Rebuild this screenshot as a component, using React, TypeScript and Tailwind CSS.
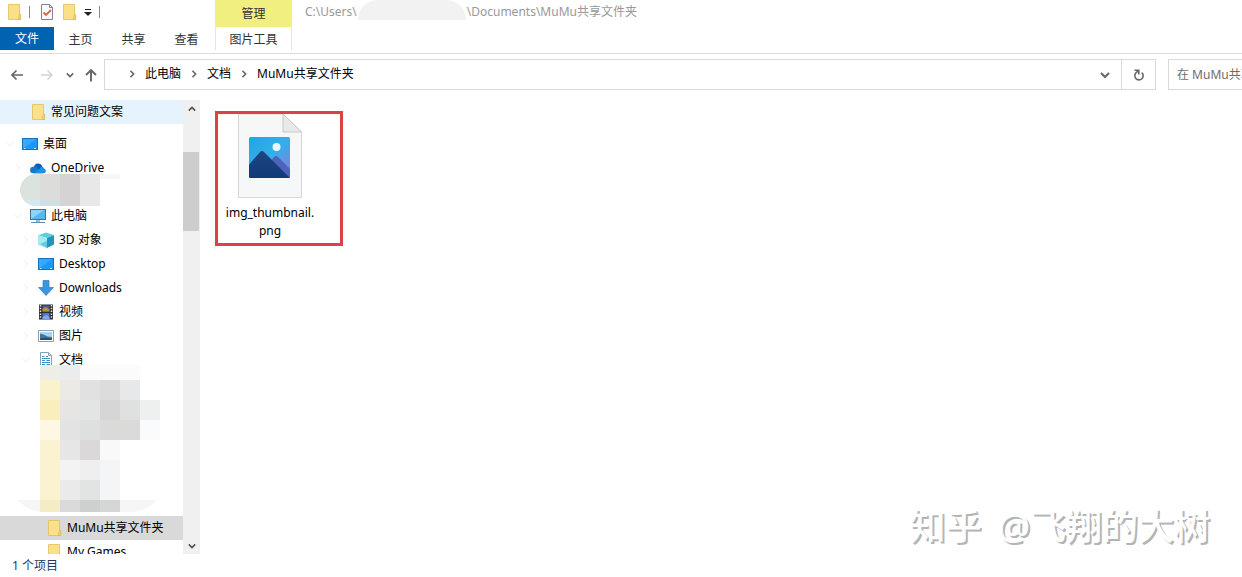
import React from 'react';

const FolderIcon = () => (
  <svg className="w-4 h-4 shrink-0" viewBox="0 0 16 16">
    <path d="M2.500.5h11v11l1 2v2h-12z" fill="#fbe08a" stroke="#e3bd58" strokeWidth=".8" />
    <path d="M13 11l1.700-1v5.500h-2.400z" fill="#f7cf62" stroke="#dfb54c" strokeWidth=".6" />
  </svg>
);

const CheckDocIcon = () => (
  <svg className="w-4 h-4 shrink-0" viewBox="0 0 16 16">
    <path d="M2.5.5h8l3 3v12h-11z" fill="#fbfbfd" stroke="#7f83a0" />
    <path d="M10.5.5v3h3" fill="none" stroke="#7f83a0" />
    <path d="M4.5 8.5l2.5 2.5 5-5" fill="none" stroke="#d8693a" strokeWidth="1.8" />
  </svg>
);

const DesktopIcon = () => (
  <svg className="w-4 h-4 shrink-0" viewBox="0 0 16 16">
    <rect x=".5" y="2.5" width="15" height="11" fill="#1e98f5" stroke="#1470b8" />
    <path d="M1 12.5L14 3H1z" fill="#38a8fb" />
    <path d="M2 12.5h1.5M12 12.5h2" stroke="#d6eefe" />
  </svg>
);

const OneDriveIcon = () => (
  <svg className="w-4 h-4 shrink-0" viewBox="0 0 16 16">
    <path d="M4 7A4.4 4.4 0 0 1 12.3 6L11 10H3z" fill="#0f5fb3" />
    <path d="M3.2 13.2a3.2 3.2 0 0 1 .2-6.4c1.6-.5 3 .1 4 1.1l5.6 5.3z" fill="#1478d0" />
    <path d="M4 13.2l6-4.5c.5-2.5 3.3-2.5 3.9-.2 1.4.3 2 1.3 2 2.5s-.8 2.2-2 2.2z" fill="#2090e2" />
  </svg>
);

const ComputerIcon = () => (
  <svg className="w-4 h-4 shrink-0" viewBox="0 0 16 16">
    <rect x=".5" y="1.5" width="15" height="10" fill="#54b9f2" stroke="#45708f" />
    <path d="M1 11V2h13z" fill="#8bd5fa" />
    <path d="M6 12h4v2H6z" fill="#a9bcc9" />
    <path d="M1 14.5h14" stroke="#5d8fb2" />
  </svg>
);

const CubeIcon = () => (
  <svg className="w-4 h-4 shrink-0" viewBox="0 0 16 16">
    <path d="M0 3.5L8 .5l8 2.5-7 3z" fill="#58cfe0" />
    <path d="M0 3.5L9 6v10l-9-3z" fill="#a5e9f2" />
    <path d="M9 6l7-3v9.5L9 16z" fill="#1f97b5" />
    <path d="M2 12l7-3v7z" fill="#63c9dc" />
  </svg>
);

const DownloadIcon = () => (
  <svg className="w-4 h-4 shrink-0" viewBox="0 0 16 16">
    <path d="M5 .5h6v7h4.5L8 15.5.5 7.5H5z" fill="#3c95dd" stroke="#2f7cc0" strokeWidth=".7" />
  </svg>
);

const VideoIcon = () => (
  <svg className="w-4 h-4 shrink-0" viewBox="0 0 16 16">
    <path d="M1 .5h14v15H1z" fill="#2b2c31" />
    <path d="M2.5 1v14M13.5 1v14" stroke="#e6e6e6" strokeWidth="1.5" strokeDasharray="1.5 1.3" />
    <path d="M4.5 1.5h7v6h-7z" fill="#4d5f95" />
    <path d="M4.5 9h7v6h-7z" fill="#4c78d4" />
    <path d="M4.5 5l3-2 4 2.5v2h-7z" fill="#b59240" />
    <path d="M4.5 13l4-2 3 2v2h-7z" fill="#88a5e2" />
  </svg>
);

const PictureIcon = () => (
  <svg className="w-4 h-4 shrink-0" viewBox="0 0 16 16">
    <path d="M.5 2.5h15v11H.5z" fill="#fff" stroke="#8da0ae" />
    <path d="M2 4h12v8H2z" fill="#a7d5ef" />
    <path d="M2 6c3-1 5 3 12 3v3H2z" fill="#42779c" />
    <path d="M2 10.5c4-1 8-1 12 .5v1H2z" fill="#244e72" />
  </svg>
);

const DocumentIcon = () => (
  <svg className="w-4 h-4 shrink-0" viewBox="0 0 16 16">
    <path d="M2.5.5h8l3 3v12h-11z" fill="#fff" stroke="#7fa3b8" />
    <path d="M10.5.5v3h3" fill="none" stroke="#7fa3b8" />
    <path d="M4 4.5h2.5M8 4.5h2M4 6.5h8M4 8.5h3M8.5 8.5H12M4 10.5h8M4 12.5h3M8.5 12.5H12" stroke="#3f8fc4" />
  </svg>
);

const Chevron = ({ d, className }: { d: string; className: string }) => (
  <svg className={`shrink-0 ${className}`} viewBox="0 0 10 10" fill="none" stroke="currentColor">
    <path d={d} />
  </svg>
);

const RIGHT = 'M3 1l4 4-4 4';
const DOWN = 'M1 3l4 4 4-4';
const UP = 'M1 7l4-4 4 4';

const Separator = () => <Chevron d={RIGHT} className="w-2 h-2 text-[#666] stroke-2" />;

const ImageFileIcon = () => (
  <svg className="w-16 h-[84px]" viewBox="0 0 64 84">
    <defs>
      <linearGradient id="sky" x1="0" y1="0" x2="1" y2="1">
        <stop offset="0" stopColor="#1fa6e0" />
        <stop offset=".5" stopColor="#33b0ea" />
        <stop offset="1" stopColor="#9a6fd8" />
      </linearGradient>
      <linearGradient id="hill" x1="0" y1="0" x2="0" y2="1">
        <stop offset="0" stopColor="#1d4581" />
        <stop offset="1" stopColor="#123a78" />
      </linearGradient>
      <clipPath id="photo">
        <rect x="11" y="23" width="41" height="41" rx="1.5" />
      </clipPath>
    </defs>
    <path d="M.5 0v83.5h63V18L45 0z" fill="#f6f7f8" stroke="#d6d6d6" />
    <path d="M45 0v18h18.5z" fill="#e9e9ea" stroke="#c8c8c8" />
    <g clipPath="url(#photo)">
      <rect x="11" y="23" width="41" height="41" fill="url(#sky)" />
      <path d="M28 53l8-10q2-2 4 0l14 14v8H30z" fill="#4f63bb" />
      <path d="M9 53l13-15q2-2 4 0l27 27H9z" fill="url(#hill)" />
      <circle cx="38.5" cy="33" r="4" fill="#eaf8fd" />
    </g>
  </svg>
);

// [x, y, width, height, colour]
type Block = [number, number, number, number, string];

const accountBlocks: Block[] = [
  [20, 0, 20, 32, '#dbe3de'],
  [40, 0, 20, 32, '#dcdcda'],
  [60, 0, 20, 32, '#d5d3d3'],
  [80, 0, 20, 32, '#e8e8e9'],
  [100, 0, 20, 5, '#f7f7f7'],
  [20, 26, 20, 6, '#d5e8ef'],
  [40, 26, 20, 6, '#d1dfe5'],
];

const folderBlocks: Block[] = [
  [40, 0, 20, 15, '#efeee6'],
  [60, 0, 20, 15, '#ebecec'],
  [80, 0, 60, 15, '#fbfbfc'],
  [40, 15, 20, 20, '#faf1cd'],
  [60, 15, 20, 20, '#ebeae7'],
  [80, 15, 20, 20, '#e1e1e1'],
  [100, 15, 20, 20, '#dcdcdc'],
  [120, 15, 20, 20, '#e7e8e9'],
  [40, 35, 20, 20, '#faeebd'],
  [60, 35, 20, 20, '#e6e5e4'],
  [80, 35, 20, 20, '#e3e4e4'],
  [100, 35, 20, 20, '#d6d6d6'],
  [120, 35, 20, 20, '#dfe1e1'],
  [140, 35, 20, 20, '#eeefef'],
  [40, 55, 20, 20, '#fdf7e3'],
  [60, 55, 20, 20, '#e4e3e4'],
  [80, 55, 20, 20, '#dde0df'],
  [100, 55, 40, 20, '#dadad9'],
  [140, 55, 20, 20, '#fafbfd'],
  [40, 75, 20, 70, '#faf2d0'],
  [60, 75, 20, 20, '#e6e6e7'],
  [80, 75, 20, 20, '#dad8d9'],
  [100, 75, 20, 20, '#f9f9fa'],
  [60, 95, 20, 20, '#f4f3f4'],
  [80, 95, 20, 20, '#efeff0'],
  [100, 95, 20, 40, '#f4f5f6'],
  [60, 115, 20, 20, '#ebeaea'],
  [80, 115, 20, 20, '#e2e3e3'],
  [40, 135, 20, 12, '#f5ecc5'],
  [60, 135, 20, 12, '#dadada'],
  [80, 135, 20, 12, '#ced0d0'],
  [100, 135, 20, 12, '#d5d6d6'],
];

const Mosaic = ({ blocks }: { blocks: Block[] }) => (
  <>
    {blocks.map(([x, y, w, h, fill]) => (
      <rect key={`${x}-${y}`} x={x} y={y} width={w} height={h} fill={fill} />
    ))}
  </>
);

type RowProps = {
  icon: React.ReactNode;
  label: string;
  indent: string;
  arrow?: 'open' | 'closed';
  active?: string;
};

const TreeRow = ({ icon, label, indent, arrow, active = '' }: RowProps) => (
  <li>
    <button className={`flex w-full h-6 items-center gap-[5px] whitespace-nowrap ${indent} ${active}`}>
      <span className="w-[11px] shrink-0 text-[#e4e4e4]">
        {arrow && <Chevron d={arrow === 'open' ? DOWN : RIGHT} className="w-2 h-2" />}
      </span>
      {icon}
      <span>{label}</span>
    </button>
  </li>
);

const Header = () => (
  <header className="flex h-[54px] shrink-0 border-b border-[#dadbdc]">
    <div className="w-[215px] shrink-0">
      <div className="flex h-[27px] items-center pl-[6px] pb-1">
        <FolderIcon />
        <span className="ml-[7px] w-px h-3 bg-[#8a8a8a]" />
        <span className="ml-[9px] mr-[6px] flex">
          <CheckDocIcon />
        </span>
        <FolderIcon />
        <button aria-label="自定义快速访问工具栏" className="ml-[6px] p-px">
          <svg className="w-2 h-2" viewBox="0 0 8 8">
            <path d="M1 1.5h6" stroke="#222" />
            <path d="M0 4h8L4 8z" fill="#222" />
          </svg>
        </button>
        <span className="ml-[6px] w-px h-3 bg-[#8a8a8a]" />
      </div>
      <nav className="flex h-[23px] text-[#333]">
        <button className="w-[54px] bg-[#0063b1] pt-px text-white">文件</button>
        <button className="w-[53px] pt-[2px]">主页</button>
        <button className="w-[53px] pt-[2px]">共享</button>
        <button className="w-[53px] pt-[2px]">查看</button>
      </nav>
    </div>
    <div className="w-[77px] shrink-0 text-[#333]">
      <div className="flex h-[27px] items-center justify-center bg-[#f1ef7f]">管理</div>
      <button className="w-full h-[23px] border-x border-[#e4e4e4] pt-[2px]">图片工具</button>
    </div>
    <div className="flex h-6 min-w-0 items-center pl-[13px] whitespace-nowrap text-[#999]">
      <span>C:\Users\</span>
      <span className="mx-px w-[108px] h-5 self-start rounded-t-[20px] bg-[#f2f2f2]" />
      <span>\Documents\MuMu共享文件夹</span>
    </div>
  </header>
);

const NavBar = () => (
  <div className="flex h-[46px] shrink-0 items-start pt-[5px]">
    <div className="flex w-[104px] h-[31px] shrink-0 items-center pl-[10px] text-[#666]">
      <button aria-label="后退">
        <svg className="w-[14px] h-[14px]" viewBox="0 0 14 14" fill="none" stroke="currentColor" strokeWidth="1.7">
          <path d="M13 7H2M6.5 2.5L2 7l4.5 4.5" />
        </svg>
      </button>
      <button aria-label="前进" className="ml-4 text-[#d4d4d4]">
        <svg className="w-[14px] h-[14px]" viewBox="0 0 14 14" fill="none" stroke="currentColor" strokeWidth="1.5">
          <path d="M1 7h11M7.5 2.5L12 7l-4.5 4.5" />
        </svg>
      </button>
      <button aria-label="最近位置" className="ml-3">
        <Chevron d={DOWN} className="w-2 h-2 stroke-2" />
      </button>
      <button aria-label="上移" className="ml-[10px]">
        <svg className="w-[14px] h-[14px]" viewBox="0 0 14 14" fill="none" stroke="currentColor" strokeWidth="1.9">
          <path d="M7 13.5V2M2 7l5-5 5 5" />
        </svg>
      </button>
    </div>
    <div className="flex flex-1 h-[31px] min-w-0 border border-[#d9d9d9]">
      <div className="flex flex-1 min-w-0 items-center gap-[9px] pl-[23px] pb-px whitespace-nowrap">
        <Separator />
        <button>此电脑</button>
        <Separator />
        <button>文档</button>
        <Separator />
        <button>MuMu共享文件夹</button>
      </div>
      <button aria-label="以前的位置" className="w-8 text-[#666]">
        <Chevron d={DOWN} className="mx-auto w-[10px] h-[10px] stroke-2" />
      </button>
      <button aria-label="刷新" className="flex w-[34px] items-center justify-center border-l border-[#d9d9d9] text-[#666]">
        <svg className="w-3 h-3" viewBox="0 0 12 12" fill="none" stroke="currentColor" strokeWidth="1.6">
          <path d="M8.8 3.6A4.2 4.2 0 1 1 3.4 3.4L5.3 1.8" />
          <path d="M1.5 1.2h4.3v4.3" />
        </svg>
      </button>
    </div>
    <input
      type="text"
      aria-label="搜索"
      placeholder="在 MuMu共享文件夹 中搜索"
      className="ml-3 w-[74px] h-[31px] shrink-0 border border-r-0 border-[#d9d9d9] pl-2 outline-none placeholder:text-[#6d6d6d]"
    />
  </div>
);

const Sidebar = () => (
  <aside className="flex w-[200px] shrink-0 overflow-hidden">
    <ul className="flex-1 min-w-0">
      <TreeRow icon={<FolderIcon />} label="常见问题文案" indent="pl-[14px]" active="mb-2 bg-[#e5f3ff]" />
      <TreeRow icon={<DesktopIcon />} label="桌面" indent="pl-[6px]" arrow="open" />
      <TreeRow icon={<OneDriveIcon />} label="OneDrive" indent="pl-[14px]" arrow="closed" />
      <li className="relative h-6">
        <svg className="absolute left-0 -top-[6px] w-[183px] h-8" viewBox="0 0 183 32">
          <clipPath id="account">
            <path d="M36 0h84v32H36a16 16 0 0 1 0-32z" />
          </clipPath>
          <g clipPath="url(#account)">
            <Mosaic blocks={accountBlocks} />
          </g>
        </svg>
      </li>
      <TreeRow icon={<ComputerIcon />} label="此电脑" indent="pl-[14px]" arrow="open" />
      <TreeRow icon={<CubeIcon />} label="3D 对象" indent="pl-[22px]" arrow="closed" />
      <TreeRow icon={<DesktopIcon />} label="Desktop" indent="pl-[22px]" arrow="closed" />
      <TreeRow icon={<DownloadIcon />} label="Downloads" indent="pl-[22px]" arrow="closed" />
      <TreeRow icon={<VideoIcon />} label="视频" indent="pl-[22px]" arrow="closed" />
      <TreeRow icon={<PictureIcon />} label="图片" indent="pl-[22px]" arrow="closed" />
      <TreeRow icon={<DocumentIcon />} label="文档" indent="pl-[22px]" arrow="open" />
      <li className="relative h-36">
        <svg className="absolute left-0 -top-[7px] w-[183px] h-[147px]" viewBox="0 0 183 147">
          <path d="M18 135h138q-6 9-20 12H40q-15-3-22-12z" fill="#f6f6f6" />
          <Mosaic blocks={folderBlocks} />
        </svg>
      </li>
      <TreeRow icon={<FolderIcon />} label="MuMu共享文件夹" indent="pl-[30px]" active="bg-[#d9d9d9]" />
      <TreeRow icon={<FolderIcon />} label="My Games" indent="pl-[30px]" />
    </ul>
    <div className="flex w-[17px] shrink-0 flex-col bg-[#f0f0f0] text-[#505050]">
      <button aria-label="向上滚动" className="h-[17px]">
        <Chevron d={UP} className="mx-auto w-2 h-2 stroke-2" />
      </button>
      <div className="flex-1 pt-[35px]">
        <div className="mr-px h-[79px] bg-[#cdcdcd]" />
      </div>
      <button aria-label="向下滚动" className="h-[17px]">
        <Chevron d={DOWN} className="mx-auto w-2 h-2 stroke-2" />
      </button>
    </div>
  </aside>
);

const App = () => {
  return (
    <div className="relative flex h-screen flex-col overflow-hidden bg-white font-['Noto_Sans','Noto_Sans_CJK_SC',sans-serif] text-xs text-black">
      <Header />
      <NavBar />
      <div className="flex min-h-0 flex-1">
        <Sidebar />
        <main className="flex-1 min-w-0 pl-[15px] pt-[11px]">
          <button className="flex w-32 h-[135px] flex-col items-center border-3 border-[#dc4244] pr-[18px] leading-[18px]">
            <ImageFileIcon />
            <span className="mt-[6px]">
              img_thumbnail.
              <br />
              png
            </span>
          </button>
        </main>
      </div>
      <footer className="flex h-[23px] shrink-0 items-center pl-3 text-[#1e395b]">1 个项目</footer>
      <div className="absolute right-8 bottom-[26px] flex gap-4 whitespace-nowrap text-4xl leading-[48px] font-medium text-white [text-shadow:2px_2px_0_#b4b4b4]">
        <span>知乎</span>
        <span>@飞翔的大树</span>
      </div>
    </div>
  );
};

export default App;
